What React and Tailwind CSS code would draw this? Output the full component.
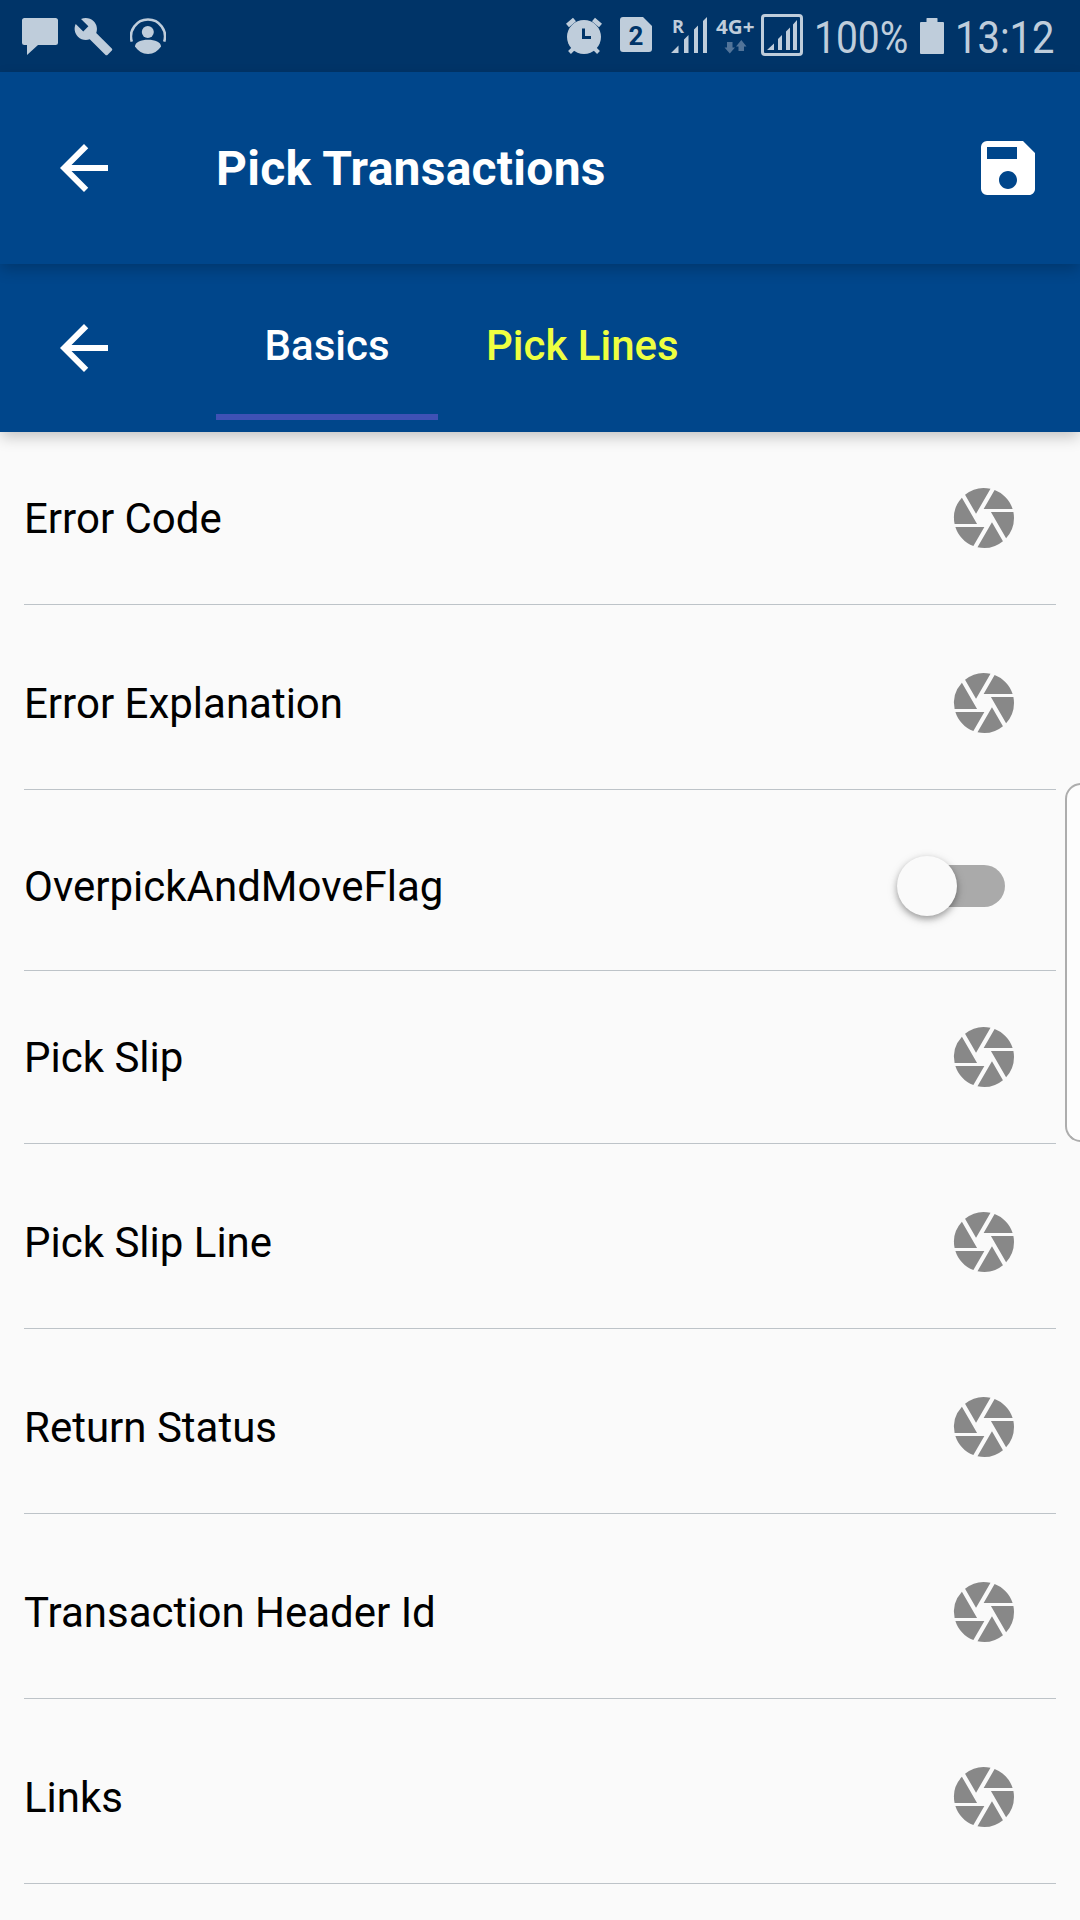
import { MdArrowBack, MdBuild, MdCamera, MdSave } from "react-icons/md";

const rows = [
  { label: "Error Code", height: "h-[173px]" },
  { label: "Error Explanation", height: "h-[185px]" },
  { label: "OverpickAndMoveFlag", height: "h-[181px]", toggle: true },
  { label: "Pick Slip", height: "h-[173px]" },
  { label: "Pick Slip Line", height: "h-[185px]" },
  { label: "Return Status", height: "h-[185px]" },
  { label: "Transaction Header Id", height: "h-[185px]" },
  { label: "Links", height: "h-[185px]" },
];

function StatusBar() {
  return (
    <div className="flex h-[72px] shrink-0 items-center justify-between bg-[#003468] text-[#bfcddb]">
      <div className="flex items-center pl-[22px]">
        <svg className="h-[72px] w-[36px]" viewBox="22 0 36 72" fill="currentColor">
          <path d="M24.500 18H55.500Q58 18 58 20.500V42.500Q58 45 55.500 45H38L27 55V45H24.500Q22 45 22 42.500V20.500Q22 18 24.500 18Z" />
        </svg>
        <MdBuild className="ml-[15px] size-[41px]" />
        <svg className="ml-[16px] h-[72px] w-[36px]" viewBox="130 0 36 72" fill="currentColor">
          <path d="M131.800 41.600A17 17 0 1 1 164.200 41.600" fill="none" stroke="currentColor" strokeWidth="2.600" />
          <circle cx="147.800" cy="32" r="6" />
          <path d="M135 46.500C135 42 141 39.700 148 39.700S161 42 161 46.500C158 51 153.500 54 148 54S138 51 135 46.500Z" />
        </svg>
      </div>
      <div className="flex items-center pr-[20px]">
        <svg className="h-[72px] w-[38px]" viewBox="565 0 38 72" fill="none">
          <circle cx="584" cy="37" r="17" fill="currentColor" />
          <path d="M567.500 25.500 574.500 19.500M593.500 19.500 600.500 25.500" stroke="currentColor" strokeWidth="4.600" />
          <path d="M574 48 569.500 52.500M594 48 598.500 52.500" stroke="currentColor" strokeWidth="4" />
          <path d="M583.500 28.500V37.500H591" stroke="#003468" strokeWidth="3" />
        </svg>
        <svg className="ml-[17px] h-[72px] w-[32px]" viewBox="620 0 32 72">
          <path d="M623 17H643L652 26V49Q652 52 649 52H623Q620 52 620 49V20Q620 17 623 17Z" fill="currentColor" />
          <text x="636" y="45" textAnchor="middle" fill="#003468" className="font-[Roboto] text-[26px] font-bold">2</text>
        </svg>
        <svg className="ml-[19px] h-[72px] w-[36px]" viewBox="671 0 36 72" fill="currentColor">
          <text x="672" y="32.500" className="font-['Open_Sans'] text-[18px] font-bold" textLength="12" lengthAdjust="spacingAndGlyphs">R</text>
          <path d="M671 53 678.500 45.500V53ZM684 53V39.500L688.500 35V53ZM694 53V29.500L698 25.500V53ZM703 53V21L707 17V53Z" />
        </svg>
        <svg className="ml-[8px] h-[72px] w-[42px]" viewBox="715 0 42 72" fill="currentColor">
          <text x="716" y="34" className="font-['Open_Sans'] text-[19px] font-bold" textLength="38.500" lengthAdjust="spacingAndGlyphs">4G+</text>
          <path fill="#527499" d="M727 42H732.500V47.500H735L729.800 53.500 724.500 47.500H727ZM738.500 51V46.500H736L741.300 40 746.500 46.500H744V51Z" />
        </svg>
        <svg className="ml-[4px] h-[72px] w-[42px]" viewBox="761 0 42 72" fill="currentColor">
          <rect x="762.500" y="15.500" width="39" height="39" rx="2.500" fill="none" stroke="currentColor" strokeWidth="3" />
          <path d="M767 50 774 43.500V50ZM778 50V39L782 35V50ZM786 50V31.500L790 27.500V50ZM793 50V24.500L797 20V50Z" />
        </svg>
        <div className="flex h-[72px] w-[117px] pt-[4px] pl-[11px] text-[45px] leading-[68px]">
          <span className="origin-left scale-x-[0.866]">100%</span>
        </div>
        <svg className="h-[72px] w-[24px]" viewBox="920 0 24 72" fill="currentColor">
          <path d="M926.500 22V18.500Q926.500 18 927 18H937Q937.500 18 937.500 18.500V22H943Q944 22 944 23V53Q944 54 943 54H921Q920 54 920 53V23Q920 22 921 22Z" />
        </svg>
        <div className="flex h-[72px] w-[116px] pt-[4px] pl-[11px] text-[45px] leading-[68px]">
          <span className="origin-left scale-x-[0.888]">13:12</span>
        </div>
      </div>
    </div>
  );
}

function Toggle() {
  return (
    <div className="mr-[51px] flex h-[60px] w-[108px] items-center">
      <div className="z-10 size-[60px] shrink-0 rounded-full bg-[#fafafa] shadow-[0_3px_6px_rgba(0,0,0,0.3),0_3px_12px_rgba(0,0,0,0.12)]" />
      <div className="-ml-[48px] h-[42px] w-[96px] shrink-0 rounded-full bg-[#aaaaaa]" />
    </div>
  );
}

function Row({ label, height, toggle }) {
  return (
    <div className={`${height} flex shrink-0 flex-col justify-end border-b border-[#bdc3c8]`}>
      <div className={`flex h-[72px] items-center justify-between ${toggle ? "mb-[48px]" : "mb-[50px]"}`}>
        <span className="pt-[2px] text-[42px] leading-[48px] whitespace-nowrap text-black">{label}</span>
        {toggle ? <Toggle /> : <MdCamera className="mr-9 size-[72px] text-[#888888]" />}
      </div>
    </div>
  );
}

export default function App() {
  return (
    <div className="relative flex h-[1920px] w-[1080px] flex-col overflow-hidden bg-[#fafafa] font-[Roboto,sans-serif]">
      <StatusBar />
      <header className="z-20 flex h-[192px] shrink-0 items-center bg-[#00468b] pr-9 pl-12 text-white shadow-[0_6px_14px_-1px_rgba(0,0,0,0.22)]">
        <MdArrowBack className="size-[72px]" />
        <h1 className="ml-24 flex-1 pt-[2px] text-[48px] leading-[56px] font-bold tracking-[0.25px]">Pick Transactions</h1>
        <MdSave className="size-[72px]" />
      </header>
      <nav className="z-10 flex h-[168px] shrink-0 items-center bg-[#00468b] pl-12 text-[42px] leading-[48px] font-medium text-white shadow-[0_6px_14px_-1px_rgba(0,0,0,0.22)]">
        <MdArrowBack className="size-[72px]" />
        <div className="ml-24 flex h-[156px]">
          <div className="flex h-[150px] w-[222px] items-center justify-center border-b-[6px] border-[#3f51b5] pt-2">Basics</div>
          <div className="flex h-[144px] items-center px-12 pt-2 text-[#eeff41]">Pick Lines</div>
        </div>
      </nav>
      <main className="flex flex-col px-6">
        {rows.map((row) => (
          <Row key={row.label} {...row} />
        ))}
      </main>
      <div className="absolute top-[783px] -right-[2px] h-[359px] w-[17px] rounded-l-[16px] border-2 border-[#adadad] bg-[#fdfdfd]" />
    </div>
  );
}
